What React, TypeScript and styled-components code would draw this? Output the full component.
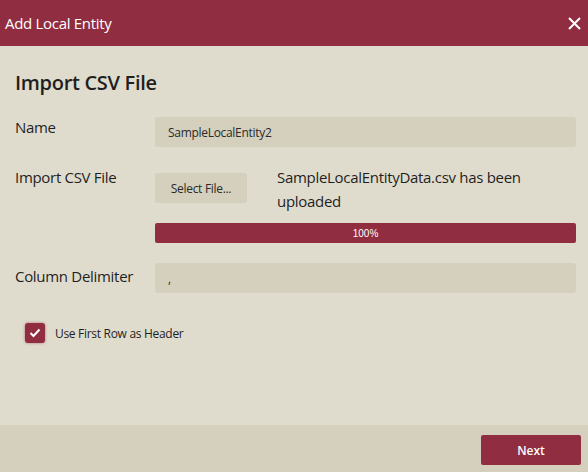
import React from "react";
import styled, { createGlobalStyle } from "styled-components";

const GlobalStyle = createGlobalStyle`
  html, body {
    margin: 0;
    padding: 0;
    background: #e0dccd;
  }
  body {
    font-family: "Open Sans", "Noto Sans", sans-serif;
    color: #1f1f1f;
  }
`;

const Dialog = styled.div`
  width: 588px;
  height: 472px;
  display: flex;
  flex-direction: column;
  background: #e0dccd;
`;

const Header = styled.div`
  height: 46px;
  flex: 0 0 46px;
  background: #902d40;
  display: flex;
  align-items: center;
  justify-content: space-between;
  padding: 0 6px 0 5px;
  color: #fff;
`;

const Title = styled.div`
  font-size: 15px;
  letter-spacing: -0.3px;
`;

const CloseButton = styled.button`
  border: none;
  background: transparent;
  padding: 0;
  width: 16px;
  height: 16px;
  display: flex;
  align-items: center;
  justify-content: center;
  cursor: pointer;
`;

const Body = styled.div`
  flex: 1;
  padding: 25px 12px 0 15px;
`;

const Heading = styled.h2`
  margin: 0 0 19px;
  font-size: 20px;
  font-weight: 600;
  line-height: 24px;
  letter-spacing: -0.3px;
`;

const Row = styled.div<{ $gap?: number }>`
  display: flex;
  align-items: flex-start;
  margin-bottom: ${(p) => p.$gap ?? 0}px;
`;

const Label = styled.div<{ $top?: number }>`
  width: 140px;
  flex: 0 0 140px;
  font-size: 15px;
  line-height: 24px;
  letter-spacing: -0.3px;
  padding-top: ${(p) => p.$top ?? 0}px;
`;

const Field = styled.div`
  flex: 1;
  display: flex;
  flex-direction: column;
`;

const Input = styled.div<{ $top?: number }>`
  height: 30px;
  margin-top: ${(p) => p.$top ?? 0}px;
  background: #d4d0bd;
  border-radius: 3px;
  font-size: 12px;
  display: flex;
  align-items: center;
  padding-left: 13px;
  letter-spacing: -0.3px;
  color: #2a2a2a;
`;

const UploadLine = styled.div`
  display: flex;
  align-items: flex-start;
  gap: 30px;
`;

const SelectButton = styled.button`
  margin-top: 9px;
  height: 30px;
  width: 92px;
  border: none;
  border-radius: 3px;
  background: #d4d0bd;
  font-family: inherit;
  font-size: 12px;
  letter-spacing: -0.3px;
  color: #2a2a2a;
  padding: 0;
`;

const UploadText = styled.div`
  font-size: 15px;
  line-height: 24px;
  letter-spacing: -0.3px;
  padding-top: 1px;
`;

const Progress = styled.div`
  margin-top: 10px;
  height: 20px;
  background: #902d40;
  border-radius: 2px;
  color: #fff;
  font-family: "Liberation Sans", Arial, sans-serif;
  font-size: 10px;
  display: flex;
  align-items: center;
  justify-content: center;
`;

const CheckRow = styled.label`
  display: flex;
  align-items: center;
  gap: 10px;
  margin: 30px 0 0 10px;
  font-size: 12px;
  letter-spacing: -0.3px;
`;

const CheckBox = styled.span`
  width: 20px;
  height: 20px;
  border-radius: 3px;
  background: #902d40;
  box-shadow: 0 0 3px rgba(144, 45, 64, 0.6);
  display: flex;
  align-items: center;
  justify-content: center;
`;

const Footer = styled.div`
  height: 47px;
  flex: 0 0 47px;
  background: #d4d0bd;
  display: flex;
  justify-content: flex-end;
  align-items: flex-start;
  padding: 10px 7px 0 0;
  box-sizing: border-box;
`;

const NextButton = styled.button`
  width: 100px;
  height: 30px;
  border: none;
  border-radius: 2px;
  background: #902d40;
  color: #fff;
  font-family: inherit;
  font-size: 12px;
  font-weight: 600;
`;

export default function App() {
  return (
    <>
      <GlobalStyle />
      <Dialog>
        <Header>
          <Title>Add Local Entity</Title>
          <CloseButton aria-label="Close">
            <svg width="13" height="13" viewBox="0 0 13 13">
              <path d="M1 1L12 12M12 1L1 12" stroke="#fff" strokeWidth="2" />
            </svg>
          </CloseButton>
        </Header>
        <Body>
          <Heading>Import CSV File</Heading>
          <Row $gap={17}>
            <Label $top={1}>Name</Label>
            <Field>
              <Input $top={3}>SampleLocalEntity2</Input>
            </Field>
          </Row>
          <Row $gap={20}>
            <Label $top={1}>Import CSV File</Label>
            <Field>
              <UploadLine>
                <SelectButton>Select File...</SelectButton>
                <UploadText>
                  SampleLocalEntityData.csv has been
                  <br />
                  uploaded
                </UploadText>
              </UploadLine>
              <Progress>100%</Progress>
            </Field>
          </Row>
          <Row>
            <Label $top={1}>Column Delimiter</Label>
            <Field>
              <Input>,</Input>
            </Field>
          </Row>
          <CheckRow>
            <CheckBox>
              <svg width="12" height="10" viewBox="0 0 12 10">
                <path d="M1.5 5L4.5 8L10.5 1.5" stroke="#fff" strokeWidth="2" fill="none" />
              </svg>
            </CheckBox>
            Use First Row as Header
          </CheckRow>
        </Body>
        <Footer>
          <NextButton>Next</NextButton>
        </Footer>
      </Dialog>
    </>
  );
}
